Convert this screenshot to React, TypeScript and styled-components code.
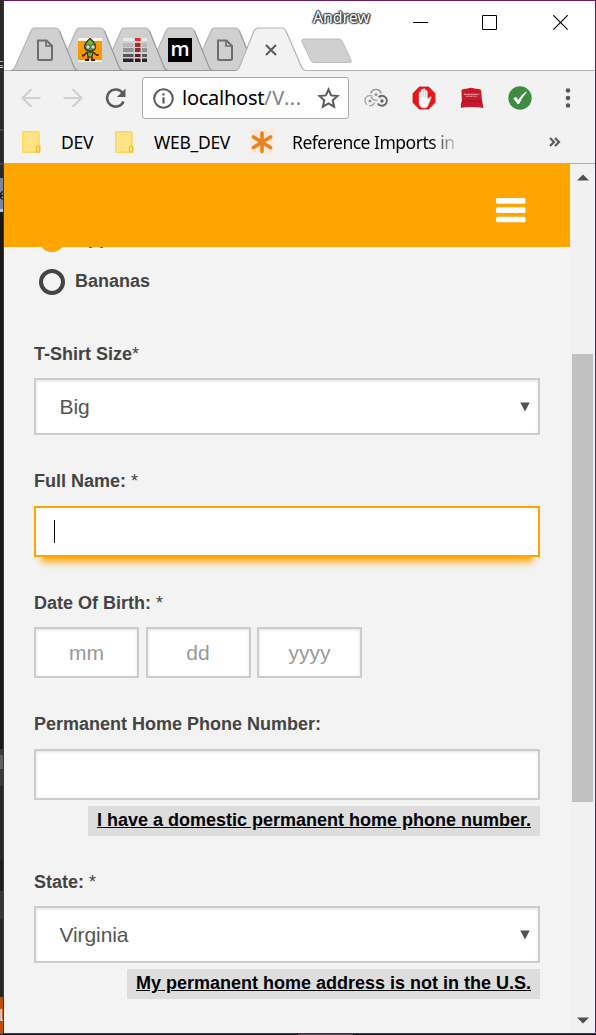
import React from "react";
import styled, { createGlobalStyle } from "styled-components";

const Global = createGlobalStyle`
  * { box-sizing: border-box; }
  body { margin: 0; background: #1b1818; overflow: hidden; }
  svg { display: block; flex: none; }
`;

const Desktop = styled.div`
  display: flex;
  width: 596px;
  height: 1035px;
  overflow: hidden;
  font-family: "Liberation Sans", Arial, sans-serif;
`;

const Backdrop = styled.div`
  display: flex;
  flex-direction: column;
  flex: none;
  width: 3px;
  overflow: hidden;
`;

const Strip = styled.div<{ $h: number; $bg: string }>`
  flex: none;
  height: ${(p) => p.$h}px;
  background: ${(p) => p.$bg};
  overflow: hidden;
  font-size: 17px;
  line-height: ${(p) => p.$h}px;
  color: #111;
`;

const StripGlyph = styled.span<{ $shift: number; $color: string }>`
  display: block;
  margin-left: ${(p) => p.$shift}px;
  color: ${(p) => p.$color};
`;

const Column = styled.div`
  display: flex;
  flex-direction: column;
  width: 593px;
`;

const Frame = styled.div`
  display: flex;
  flex-direction: column;
  height: 1034px;
  border: 1px solid #6b1a5c;
  background: #f2f2f2;
`;

const Taskbar = styled.div`
  height: 1px;
  background: linear-gradient(90deg, #141018 295px, #55454f 295px 350px, #141018 350px);
`;

const TitleBar = styled.header`
  display: flex;
  justify-content: space-between;
  flex: none;
  height: 70px;
  background: linear-gradient(#fff 69px, #b4b4b4 69px);
`;

const Tabs = styled.div`
  display: flex;
  align-items: flex-end;
  flex: none;
  padding-left: 7px;
`;

const Tab = styled.div<{ $z: number; $active?: boolean }>`
  display: grid;
  position: relative;
  z-index: ${(p) => p.$z};
  width: ${(p) => (p.$active ? 72 : 68)}px;
  height: 44px;
  margin-right: ${(p) => (p.$active ? 0 : -23)}px;
  > * { grid-area: 1 / 1; }
`;

const Favicon = styled.div<{ $x: number }>`
  position: relative;
  padding: 11px 0 0 ${(p) => p.$x}px;
`;

const NewTab = styled.div`
  align-self: flex-start;
  padding-top: 37px;
  margin-left: -7px;
`;

const WindowControls = styled.div`
  display: flex;
  align-items: flex-start;
  flex: none;
  margin-left: -60px;
  font-family: "Noto Sans", "Open Sans", sans-serif;
`;

const UserName = styled.span`
  width: 59px;
  margin: 4px 41px 0 0;
  font-size: 16px;
  line-height: 24px;
  letter-spacing: -0.15px;
  color: #fff;
  text-shadow: 0 0 2px #222, 0 0 2px #222, 1px 1px 1px #555, -1px 0 1px #555, 1px 0 1px #555, 0 -1px 1px #555;
`;

const ControlIcon = styled.svg<{ $right: number }>`
  margin: 14px ${(p) => p.$right}px 0 0;
`;

const Toolbar = styled.div`
  display: flex;
  align-items: center;
  flex: none;
  height: 54px;
  padding-left: 17px;
`;

const Spacer = styled.div<{ $w: number }>`
  flex: none;
  width: ${(p) => p.$w}px;
`;

const AddressBar = styled.div`
  display: flex;
  align-items: center;
  flex: none;
  width: 207px;
  height: 42px;
  padding: 0 8px 0 10px;
  border: 1px solid #a9a9a9;
  border-radius: 3px;
  background: #fff;
`;

const Url = styled.span`
  flex: 1;
  padding-left: 8px;
  font: 20px/26px "Noto Sans", "Open Sans", sans-serif;
  letter-spacing: -0.25px;
  white-space: nowrap;
  color: #000;
`;

const UrlPath = styled.span`
  letter-spacing: 0.6px;
  color: #808080;
`;

const Extensions = styled.div`
  display: flex;
  gap: 24px;
  margin: 0 33px 0 15px;
`;

const Bookmarks = styled.nav`
  display: flex;
  align-items: center;
  flex: none;
  height: 39px;
  padding: 0 0 4px 18px;
  border-bottom: 1px solid #b0b0b0;
  font: 17.5px/24px "Noto Sans", "Open Sans", sans-serif;
  color: #000;
`;

const BookmarkLabel = styled.span<{ $w: number; $left: number; $spacing?: number; $fade?: boolean }>`
  flex: none;
  width: ${(p) => p.$w}px;
  margin-left: ${(p) => p.$left}px;
  padding-bottom: 1px;
  letter-spacing: ${(p) => p.$spacing ?? 0}px;
  white-space: nowrap;
  ${(p) => p.$fade && "mask-image: linear-gradient(90deg, #000 138px, transparent 168px);"}
`;

const Viewport = styled.div`
  display: flex;
  flex: 1;
  min-height: 0;
`;

const Page = styled.main`
  display: flex;
  flex-direction: column;
  flex: none;
  width: 566px;
  background: #f3f3f3;
  overflow: hidden;
`;

const PageHeader = styled.div`
  display: flex;
  align-items: center;
  justify-content: flex-end;
  flex: none;
  height: 83px;
  padding: 9px 44px 0 0;
  background: #ffa500;
`;

const Form = styled.form`
  display: flex;
  flex-direction: column;
  width: 540px;
  padding: 0 4px 0 30px;
  overflow: hidden;
`;

const RadioRow = styled.div<{ $shift: number }>`
  display: flex;
  align-items: center;
  height: 36px;
  margin-top: ${(p) => p.$shift}px;
  padding-left: 5px;
  gap: 10px;
  font: bold 18px/24px "Liberation Sans", Arial, sans-serif;
  color: #444;
`;

const Circle = styled.span<{ $checked?: boolean }>`
  width: 26px;
  height: 26px;
  border: 4px solid ${(p) => (p.$checked ? "#ffa500" : "#444")};
  border-radius: 50%;
  background: ${(p) => (p.$checked ? "#ffa500" : "transparent")};
`;

const RadioText = styled.span`
  padding-bottom: 3px;
`;

const Field = styled.div<{ $top: number }>`
  display: flex;
  flex-direction: column;
  margin-top: ${(p) => p.$top}px;
`;

const Label = styled.label<{ $gap: number }>`
  height: 24px;
  margin-bottom: ${(p) => p.$gap}px;
  font: bold 18px/24px "Liberation Sans", Arial, sans-serif;
  white-space: pre;
  color: #444;
`;

const Star = styled.span`
  font-weight: normal;
`;

const Box = styled.div<{ $h?: number; $w?: number; $focus?: boolean }>`
  display: flex;
  align-items: center;
  width: ${(p) => p.$w ?? 506}px;
  height: ${(p) => p.$h ?? 51}px;
  border: 2px solid ${(p) => (p.$focus ? "#ffa500" : "#ccc")};
  background: #fff;
  box-shadow: ${(p) => (p.$focus ? "0 12px 7px -7px #ffa500" : "inset 0 1px 3px rgba(0, 0, 0, 0.12)")};
  font-size: 21px;
  color: #555;
`;

const SelectBox = styled(Box)`
  justify-content: space-between;
  padding: 0 8px 0 23.5px;
  letter-spacing: -0.1px;
`;

const DateBox = styled(Box)`
  justify-content: center;
  color: #999;
`;

const DateRow = styled.div`
  display: flex;
  gap: 6.5px;
`;

const Caret = styled.span`
  width: 1px;
  height: 23px;
  margin-left: 18px;
  background: #000;
`;

const HelpLink = styled.a`
  align-self: flex-end;
  height: 30px;
  margin-top: 6px;
  padding: 0 9px;
  background: #ddd;
  font: bold 18px/28px "Liberation Sans", Arial, sans-serif;
  text-decoration: underline;
  white-space: nowrap;
  color: #000;
`;

const Scrollbar = styled.div`
  display: flex;
  flex-direction: column;
  align-items: center;
  flex: 1;
  padding: 10px 0 9px;
  background: #f1f1f1;
`;

const Thumb = styled.div`
  width: 21px;
  height: 448px;
  margin: 173px 0 auto;
  background: #c1c1c1;
`;

const TabShape = ({ active }: { active?: boolean }) =>
  active ? (
    <svg width="72" height="44" viewBox="0 0 72 44">
      <path d="M0 44 Q2 43 3 41 L18 4 Q19.500 1.500 22 1 H47 Q49 1.500 50 4 L66 41 Q67 43 70 44Z" fill="#f2f2f2" />
      <path d="M0 43.500 Q2 43 3 41 L18 4 Q19.500 1.500 22 1 H47 Q49 1.500 50 4 L66 41 Q67 43 70 43.500" fill="none" stroke="#b4b4b4" strokeWidth="1.200" />
    </svg>
  ) : (
    <svg width="68" height="44" viewBox="0 0 68 44">
      <path d="M0 43.500 Q3 43 4 40 L20 4 Q21 1.300 23 1 H45 Q47 1.300 48.500 4 L63 40 Q64 43 67 43.500Z" fill="#d0d0d0" />
      <path d="M0 43.500 Q3 43 4 40 L20 4 Q21 1.300 23 1 H45 Q47 1.300 48.500 4" fill="none" stroke="#b4b4b4" strokeWidth="1.200" />
      <path d="M48.500 4 L63 40 Q64 43 67 43.500 H0" fill="none" stroke="#999" strokeWidth="1.200" />
    </svg>
  );

const PageIcon = () => (
  <svg width="24" height="24" viewBox="0 0 24 24" fill="none" stroke="#6e6e6e" strokeWidth="2">
    <path d="M5 2.500 H13.500 L19 8 V20.500 Q19 22 17.500 22 H6 Q5 22 5 21Z" />
    <path d="M13 2.500 V8 H19" strokeWidth="1.700" />
  </svg>
);

const SproutIcon = () => (
  <svg width="24" height="24" viewBox="0 0 24 24">
    <path d="M0 0H24V24H0Z" fill="#fff5e4" />
    <path d="M0 3H24V22H0Z" fill="#ff9800" />
    <path d="M12 0.500 C8 4 6.500 6.500 6.500 9 Q7 13 12 13 Q17 13 17.500 9 C17.500 6 15 3 12 0.500Z" fill="#72b33b" stroke="#273616" strokeWidth="1.300" />
    <circle cx="10" cy="9" r="2.300" fill="#d6dcce" stroke="#46513e" />
    <circle cx="15" cy="9" r="2.300" fill="#d6dcce" stroke="#46513e" />
    <path d="M9 14H15L14 19H10Z" fill="#6dab3b" stroke="#302713" />
    <path d="M9 14L5.500 18M15 14L19 17.500M10 19V21M14 19V21" stroke="#302713" strokeWidth="1.400" />
    <path d="M4 16.500H6V18.500H4ZM18.500 16H20.500V18H18.500ZM7 21H11V23H7ZM13 21H17V23H13Z" fill="#30200f" />
  </svg>
);

const bars: [number, number, string, string][] = [
  [0, 3, "#e8eaeb", "#ff2222"],
  [5, 4, "#b6b9ba", "#a52b30"],
  [10, 4, "#8f9294", "#8d2b30"],
  [16, 3, "#57575c", "#602028"],
  [20.5, 3.5, "#29252d", "#39151b"],
];

const BarsIcon = () => (
  <svg width="24" height="24" viewBox="0 0 24 24">
    {bars.map(([y, h, grey, red]) => (
      <g key={y}>
        <path d={`M0 ${y}H10.500V${y + h}H0ZM19 ${y}H24V${y + h}H19Z`} fill={grey} />
        <path d={`M12 ${y}H17.500V${y + h}H12Z`} fill={red} />
      </g>
    ))}
  </svg>
);

const LetterTile = styled.div`
  width: 24px;
  height: 24px;
  background: #000;
  font: 600 20px/21px "Open Sans", sans-serif;
  text-align: center;
  color: #fff;
`;

const FolderIcon = () => (
  <svg width="19" height="22" viewBox="0 0 19 22">
    <path d="M0.700 1.500Q0.700 0.700 1.500 0.700H16Q17 0.700 17 2V14.500L18 15V20.500Q18 21.300 17 21.300H1.500Q0.700 21.300 0.700 20.500Z" fill="#ffe385" stroke="#fbd75b" strokeWidth="1.400" />
    <path d="M14.500 21V16Q14.500 15 16 15Q17.500 15 17.500 16V20Q17.500 21 16.500 21Z" fill="#ffe385" stroke="#e9bd36" strokeWidth="1.200" />
  </svg>
);

const DownArrow = () => (
  <svg width="10" height="10" viewBox="0 0 10 10">
    <path d="M0.300 0.500H9.700L5 9.500Z" fill="#505050" />
  </svg>
);

const Arrow = ({ flip }: { flip?: boolean }) => (
  <svg width="20" height="20" viewBox="0 0 20 20" fill="none" stroke="#d0d0d0" strokeWidth="2.200">
    <path d={flip ? "M0.500 10H18M9.500 1L18.500 10L9.500 19" : "M19.500 10H2M10.500 1L1.500 10L10.500 19"} />
  </svg>
);

export default function App() {
  return (
    <>
      <Global />
      <Desktop>
        <Backdrop>
          <Strip $h={60} $bg="#2b2828" />
          <Strip $h={9} $bg="linear-gradient(#222 1px,#c8b69b 1px 2px,#2b2522 2px 5px,#e09a3d 5px 6px,#3d3b38 6px 7px,#ded7c8 7px 8px,#2b2828 8px)" />
          <Strip $h={60} $bg="#2b2828" />
          <Strip $h={2} $bg="#474447" />
          <Strip $h={32} $bg="#292729" />
          <Strip $h={2} $bg="#474447" />
          <Strip $h={13} $bg="#2b2829" />
          <Strip $h={34} $bg="linear-gradient(#7685a2 31px,#aac7ec 31px)">
            <StripGlyph $shift={-1} $color="#151515">e</StripGlyph>
          </Strip>
          <Strip $h={537} $bg="#1b1714" />
          <Strip $h={6} $bg="#3b3838" />
          <Strip $h={14} $bg="#62605e" />
          <Strip $h={17} $bg="#3b393a" />
          <Strip $h={74} $bg="#282628" />
          <Strip $h={31} $bg="#201c1b" />
          <Strip $h={28} $bg="#383536" />
          <Strip $h={78} $bg="#292626" />
          <Strip $h={37} $bg="#c04d00">
            <StripGlyph $shift={-1} $color="#f0dfd3">L</StripGlyph>
          </Strip>
          <Strip $h={1} $bg="#141018" />
        </Backdrop>
        <Column>
          <Frame>
            <TitleBar>
              <Tabs>
                <Tab $z={5}><TabShape /><Favicon $x={22}><PageIcon /></Favicon></Tab>
                <Tab $z={4}><TabShape /><Favicon $x={22}><SproutIcon /></Favicon></Tab>
                <Tab $z={3}><TabShape /><Favicon $x={22}><BarsIcon /></Favicon></Tab>
                <Tab $z={2}><TabShape /><Favicon $x={22}><LetterTile>m</LetterTile></Favicon></Tab>
                <Tab $z={1}><TabShape /><Favicon $x={22}><PageIcon /></Favicon></Tab>
                <Tab $z={6} $active>
                  <TabShape active />
                  <Favicon $x={29}>
                    <svg width="12" height="24" viewBox="0 0 12 24">
                      <path d="M1 7L11 17M11 7L1 17" stroke="#5a5a5a" strokeWidth="2" />
                    </svg>
                  </Favicon>
                </Tab>
                <NewTab>
                  <svg width="52" height="26" viewBox="0 0 52 26">
                    <path d="M3 1H38Q40 1 41 3L50 22Q51 24.500 48.500 24.500H13Q11 24.500 10 22.500L1 4Q0 1.300 3 1Z" fill="#d0d0d0" stroke="#bcbcbc" strokeWidth="1" />
                  </svg>
                </NewTab>
              </Tabs>
              <WindowControls>
                <UserName>Andrew</UserName>
                <ControlIcon $right={54} width="15" height="16"><path d="M0 7.500H15" stroke="#000" /></ControlIcon>
                <ControlIcon $right={56} width="15" height="16"><path d="M0.500 0.500H14.500V14.500H0.500Z" fill="none" stroke="#000" /></ControlIcon>
                <ControlIcon $right={27} width="15" height="16"><path d="M0.300 0.300L14.700 14.700M14.700 0.300L0.300 14.700" stroke="#000" strokeWidth="1.200" /></ControlIcon>
              </WindowControls>
            </TitleBar>

            <Toolbar>
              <Arrow />
              <Spacer $w={22} />
              <Arrow flip />
              <Spacer $w={22} />
              <svg width="21" height="21" viewBox="0 0 21 21">
                <path d="M17.500 4.800A8.600 8.600 0 1 0 18.500 13.500" fill="none" stroke="#5a5a5a" strokeWidth="2.500" />
                <path d="M20.500 0.500V9H12Z" fill="#5a5a5a" />
              </svg>
              <Spacer $w={16} />
              <AddressBar>
                <svg width="21" height="21" viewBox="0 0 21 21">
                  <circle cx="10.500" cy="10.500" r="9.300" fill="none" stroke="#5a5a5a" strokeWidth="2" />
                  <path d="M9.400 9.300H11.600V15.500H9.400ZM9.400 5.300H11.600V7.500H9.400Z" fill="#5a5a5a" />
                </svg>
                <Url>localhost<UrlPath>/V...</UrlPath></Url>
                <svg width="23" height="22" viewBox="0 0 23 22">
                  <path d="M11.500 2.500L14.100 8.400L20.500 9L15.700 13.300L17.100 19.600L11.500 16.300L5.900 19.600L7.300 13.300L2.500 9L8.900 8.400Z" fill="none" stroke="#5a5a5a" strokeWidth="2" />
                </svg>
              </AddressBar>
              <Extensions>
                <svg width="24" height="24" viewBox="0 0 24 24" fill="none" strokeWidth="1.500">
                  <path d="M6.800 7.500A5.400 5.400 0 0 1 17.200 7.500" stroke="#999" />
                  <path d="M7.200 10.800A5.400 5.400 0 0 0 13.500 14M16 12.500L17.300 10" stroke="#aaa" />
                  <path d="M8.500 10.200A5 5 0 0 0 1 14.500Q1 17 3 18.800" stroke="#aaa" />
                  <path d="M5 19.500Q9 20.500 10.700 16.500" stroke="#aaa" />
                  <path d="M14.500 11A5 5 0 1 1 13.700 17.500" stroke="#686868" strokeWidth="1.900" />
                  <circle cx="12" cy="8.500" r="1.600" fill="#999" />
                  <circle cx="6" cy="15" r="1.600" fill="#999" />
                  <circle cx="18" cy="15" r="1.700" fill="#666" />
                </svg>
                <svg width="24" height="24" viewBox="0 0 24 24">
                  <path d="M7.300 1H16.700L23 7.500V16.500L16.700 23H7.300L1 16.500V7.500Z" fill="#e8161a" stroke="#d01313" strokeWidth="0.800" />
                  <path d="M7 13V6.500Q8 4.800 9 6.500V4Q10 2.200 11.100 4V3.300Q12.300 1.700 13.300 3.500V5Q14.600 3.500 15.500 5.500V13Q18 10 19.500 11L16.500 18.500Q15.500 22 12.500 22Q7.500 22 7 17Z" fill="#f8f8f8" stroke="#bcbcbc" strokeWidth="0.500" />
                  <path d="M9.100 6V11.500M11.200 4V11M13.400 5V11.500" stroke="#c4bcbc" strokeWidth="0.700" />
                </svg>
                <svg width="24" height="24" viewBox="0 0 25 24">
                  <path d="M1.500 4Q3 2 8 2Q12 0.500 15 2Q21 2 22 4L23 15L24.500 22.500Q20 21.500 12.500 21.500Q5 21.500 1 22.500Q0 18 2 15Z" fill="#c9182b" />
                  <path d="M2 16Q12 13.500 23 16" fill="none" stroke="#a30f22" />
                  <path d="M4 8.200H20M6 10.200H18" stroke="#e39aa2" strokeWidth="1.100" strokeDasharray="3 0.600" />
                </svg>
                <svg width="24" height="24" viewBox="0 0 24 24">
                  <circle cx="12" cy="12" r="11.700" fill="#3f8c41" />
                  <path d="M5.200 12.200L8 10.900L10.300 13.800Q13.500 8.500 18.300 5.500L18.700 6.300Q14 11.500 11.200 18H9.500Z" fill="#fff" />
                </svg>
              </Extensions>
              <svg width="6" height="22" viewBox="0 0 6 22" fill="#5a5a5a">
                <circle cx="3" cy="3.500" r="2.300" />
                <circle cx="3" cy="11" r="2.300" />
                <circle cx="3" cy="18.500" r="2.300" />
              </svg>
            </Toolbar>

            <Bookmarks>
              <FolderIcon />
              <BookmarkLabel $w={36} $left={20} $spacing={-0.2}>DEV</BookmarkLabel>
              <Spacer $w={18} />
              <FolderIcon />
              <BookmarkLabel $w={80} $left={20} $spacing={-0.3}>WEB_DEV</BookmarkLabel>
              <Spacer $w={16} />
              <svg width="24" height="24" viewBox="0 0 24 24">
                <path d="M0 0H24V24H0Z" fill="#fbeadb" />
                <path d="M12 3V21.500M3.500 7L20.500 17.500M20.500 7L3.500 17.500" stroke="#e88420" strokeWidth="3.600" strokeLinecap="round" />
              </svg>
              <BookmarkLabel $w={168} $left={18} $spacing={-0.5} $fade>Reference Imports in</BookmarkLabel>
              <Spacer $w={89} />
              <svg width="12" height="11" viewBox="0 0 12 11">
                <path d="M1 1L5 5L1 9M6 1L10 5L6 9" fill="none" stroke="#5a5a5a" strokeWidth="2.200" />
              </svg>
            </Bookmarks>

            <Viewport>
              <Page>
                <PageHeader>
                  <svg width="30" height="25" viewBox="0 0 30 25" fill="#fff">
                    <rect x="0" y="0" width="29.500" height="5.800" rx="1.500" />
                    <rect x="0" y="9.300" width="29.500" height="5.800" rx="1.500" />
                    <rect x="0" y="18.800" width="29.500" height="5.400" rx="1.500" />
                  </svg>
                </PageHeader>
                <Form>
                  <RadioRow $shift={-26}><Circle $checked /><RadioText>Apples</RadioText></RadioRow>
                  <RadioRow $shift={7}><Circle /><RadioText>Bananas</RadioText></RadioRow>

                  <Field $top={42}>
                    <Label $gap={12}>T-Shirt Size<Star>*</Star></Label>
                    <SelectBox $h={57}>Big<DownArrow /></SelectBox>
                  </Field>
                  <Field $top={34}>
                    <Label $gap={13}>Full Name: <Star>*</Star></Label>
                    <Box $focus><Caret /></Box>
                  </Field>
                  <Field $top={34}>
                    <Label $gap={12}>Date Of Birth: <Star>*</Star></Label>
                    <DateRow>
                      <DateBox $w={105}>mm</DateBox>
                      <DateBox $w={105}>dd</DateBox>
                      <DateBox $w={105}>yyyy</DateBox>
                    </DateRow>
                  </Field>
                  <Field $top={34}>
                    <Label $gap={13}>Permanent Home Phone Number:</Label>
                    <Box />
                    <HelpLink>I have a domestic permanent home phone number.</HelpLink>
                  </Field>
                  <Field $top={34}>
                    <Label $gap={12}>State: <Star>*</Star></Label>
                    <SelectBox $h={57}>Virginia<DownArrow /></SelectBox>
                    <HelpLink>My permanent home address is not in the U.S.</HelpLink>
                  </Field>
                </Form>
              </Page>
              <Scrollbar>
                <svg width="12" height="7" viewBox="0 0 12 7"><path d="M0 6.500L6 0.500L12 6.500Z" fill="#505050" /></svg>
                <Thumb />
                <svg width="12" height="7" viewBox="0 0 12 7"><path d="M0 0.500H12L6 6.500Z" fill="#505050" /></svg>
              </Scrollbar>
            </Viewport>
          </Frame>
          <Taskbar />
        </Column>
      </Desktop>
    </>
  );
}
